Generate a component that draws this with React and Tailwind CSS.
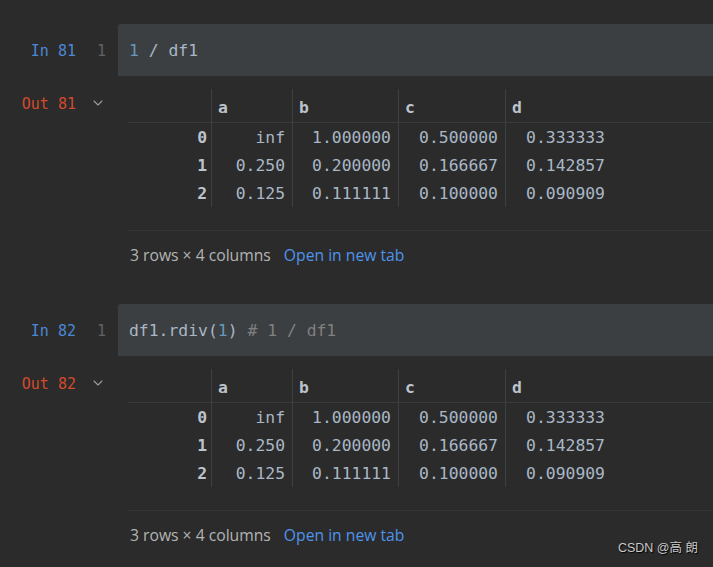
import { ChevronDown } from 'lucide-react';

const mono = { fontFamily: '"DejaVu Sans Mono", "Liberation Mono", monospace' };

const rows = [
  ['0', 'inf', '1.000000', '0.500000', '0.333333'],
  ['1', '0.250', '0.200000', '0.166667', '0.142857'],
  ['2', '0.125', '0.111111', '0.100000', '0.090909'],
];

const widths = ['w-[83px]', 'w-[81px]', 'w-[106px]', 'w-[107px]', 'w-[107px]'];

const DataTable = () => (
  <div className="text-[16.4px]" style={mono}>
    {/* header */}
    <div className="flex h-[34px] border-b border-[#383a3c]">
      {['', 'a', 'b', 'c', 'd'].map((h, i) => (
        <div key={i} className={`${widths[i]} ${i > 0 ? 'border-l border-[#3d3f41]' : ''} flex items-center pl-[6px] pt-[5px] font-bold text-[#bcc3cc]`}>
          {h}
        </div>
      ))}
      <div className="flex-1" />
    </div>
    {rows.map((r) => (
      <div key={r[0]} className="flex h-[28px]">
        {r.map((v, i) => (
          <div key={i} className={`${widths[i]} ${i > 0 ? 'border-l border-[#3d3f41]' : ''} flex items-center justify-end pt-[2px] ${i === 0 ? 'pr-[4px] font-bold text-[#bcc3cc]' : 'pr-[7px] text-[#a9b7c6]'}`}>
            {v}
          </div>
        ))}
      </div>
    ))}
  </div>
);

const Cell = ({ n, code }) => (
  <div>
    {/* input */}
    <div className="flex h-[52px]">
      <div className="w-[118px] flex items-center pt-[3px] text-[15px]" style={mono}>
        <span className="w-[76px] text-right text-[#4a88d6]">In {n}</span>
        <span className="ml-[21px] text-[#606366]">1</span>
      </div>
      <div className="flex-1 bg-[#3c3f41] rounded-tl-[3px] flex items-center pt-[2px] pl-[11px] text-[16.4px] text-[#a9b7c6]" style={mono}>
        {code}
      </div>
    </div>
    {/* output */}
    <div className="flex h-[228px]">
      <div className="w-[128px] flex items-start pt-[17px] text-[15px]" style={mono}>
        <span className="w-[76px] text-right text-[#d44a2c]">Out {n}</span>
        <ChevronDown className="ml-[14px] mt-[2px] text-[#9a9c9e]" size={16} strokeWidth={1.6} />
      </div>
      <div className="flex-1 pt-[13px]">
        <DataTable />
        <div className="mt-[23px] border-t border-[#353535] pt-[13px] flex items-center text-[15.7px] pl-[2px]" style={{ fontFamily: '"Open Sans", "Noto Sans", sans-serif' }}>
          <span className="text-[#b4b4b4]">3 rows × 4 columns</span>
          <span className="ml-[13px] text-[#4f94ec]">Open in new tab</span>
        </div>
      </div>
    </div>
  </div>
);

export default function App() {
  return (
    <div className="relative w-[713px] h-[567px] overflow-hidden bg-[#2b2b2b] pt-[24px]">
      <Cell
        n={81}
        code={
          <>
            <span className="text-[#6897bb]">1</span>
            <span>&nbsp;/ df1</span>
          </>
        }
      />
      <Cell
        n={82}
        code={
          <>
            <span>df1.rdiv(</span>
            <span className="text-[#6897bb]">1</span>
            <span>)</span>
            <span className="text-[#808080]">&nbsp;# 1 / df1</span>
          </>
        }
      />
      <div
        className="absolute right-[15px] bottom-[9px] text-[12.5px] text-[#c8c8c8] [text-shadow:1px_1px_1px_#000]"
        style={{ fontFamily: '"Liberation Sans", "Noto Sans CJK SC", sans-serif' }}
      >
        CSDN @高 朗
      </div>
    </div>
  );
}
